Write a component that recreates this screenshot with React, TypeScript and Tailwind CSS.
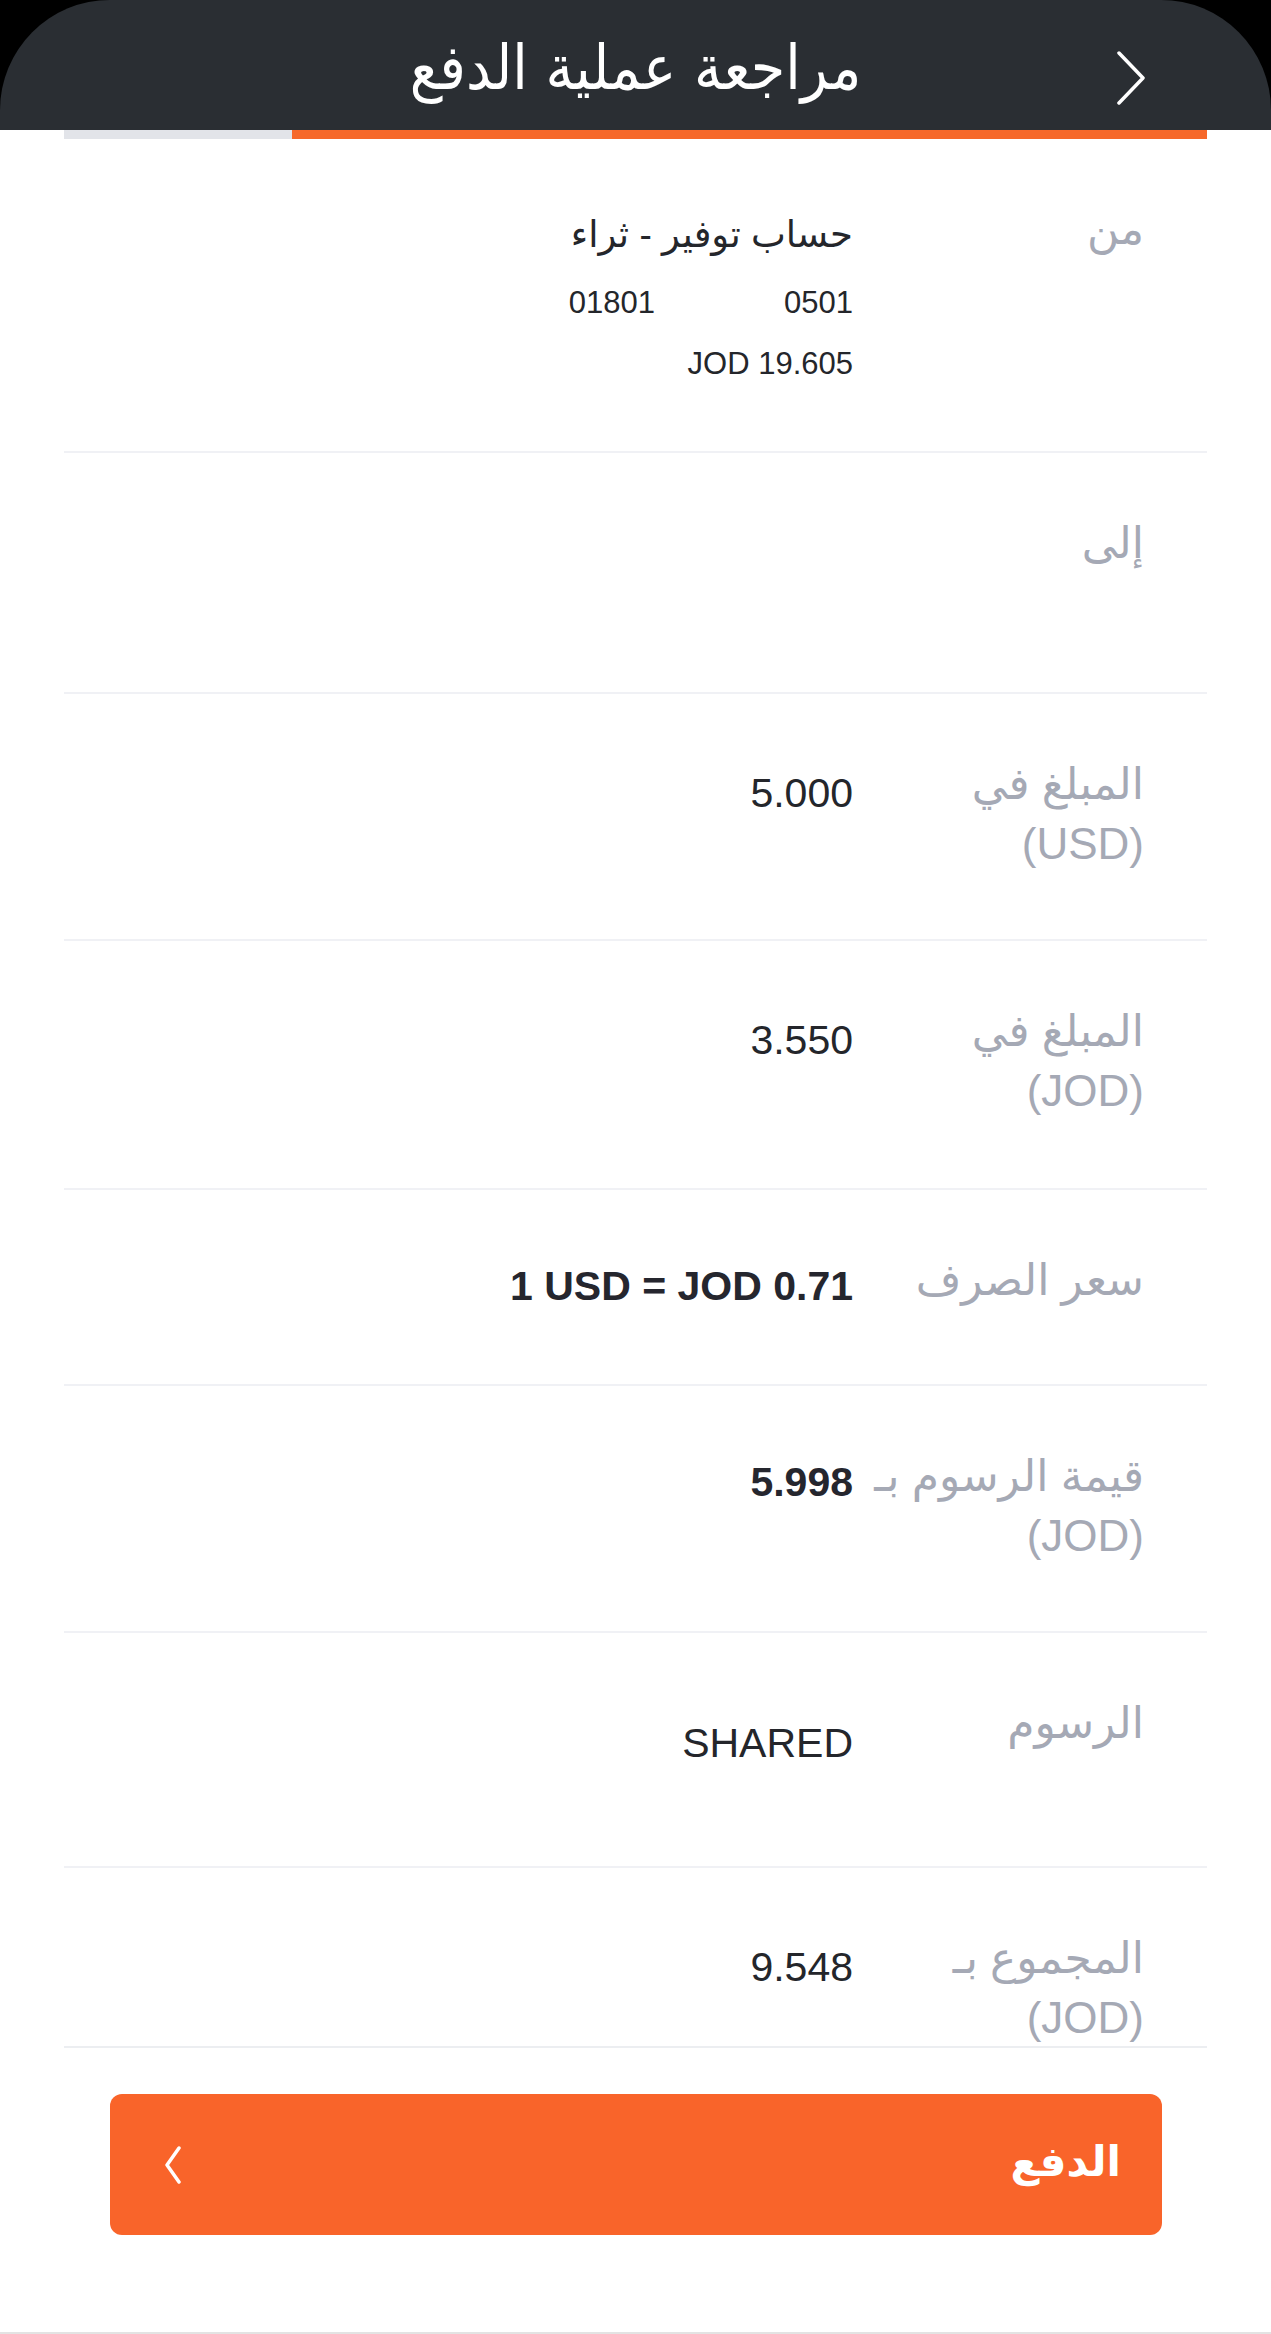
import React from "react";

type Row = {
  label: string[];
  value: string;
  bold?: boolean;
  height: string;
  valueOffset: string;
};

const rows: Row[] = [
  { label: ["إلى"], value: "", height: "h-[241px]", valueOffset: "mt-[9px]" },
  { label: ["المبلغ في", "(USD)"], value: "5.000", height: "h-[247px]", valueOffset: "mt-[9px]" },
  { label: ["المبلغ في", "(JOD)"], value: "3.550", height: "h-[249px]", valueOffset: "mt-[9px]" },
  { label: ["سعر الصرف"], value: "1 USD = JOD 0.71", bold: true, height: "h-[196px]", valueOffset: "mt-[6px]" },
  { label: ["قيمة الرسوم بـ", "(JOD)"], value: "5.998", bold: true, height: "h-[247px]", valueOffset: "mt-[6px]" },
  { label: ["الرسوم"], value: "SHARED", height: "h-[235px]", valueOffset: "mt-[20px]" },
  { label: ["المجموع بـ", "(JOD)"], value: "9.548", height: "h-[250px]", valueOffset: "mt-[9px]" },
];

function Label({ lines }: { lines: string[] }) {
  return (
    <div className="w-[270px] shrink-0 text-right text-[44px] leading-[60px] text-[#a5a9b5]">
      {lines.map((l) => (
        <div key={l}>{l}</div>
      ))}
    </div>
  );
}

function DetailRow({ row }: { row: Row }) {
  return (
    <div className={`flex shrink-0 gap-[21px] border-b-2 border-[#f0f1f5] pr-[63px] pt-[60px] ${row.height}`}>
      <Label lines={row.label} />
      <div
        className={`flex-1 text-right text-[41px] leading-[60px] ${row.valueOffset} ${
          row.bold ? "font-bold text-[#25262e]" : "text-[#24262b]"
        }`}
      >
        <span dir="ltr">{row.value}</span>
      </div>
    </div>
  );
}

export default function App() {
  return (
    <div
      dir="rtl"
      className="flex h-[2334px] w-[1271px] flex-col overflow-hidden bg-white"
      style={{ fontFamily: '"Liberation Sans", "DejaVu Sans", sans-serif' }}
    >
      {/* header */}
      <div className="shrink-0 bg-black">
        <div className="grid h-[130px] grid-cols-[1fr_auto_1fr] items-center rounded-t-[110px] bg-[#2a2e33]">
          <div className="flex justify-start pr-[125px] pt-[26px]">
            <svg width="30" height="54" viewBox="0 0 30 54" fill="none">
              <polyline points="3,2 27,27 3,52" stroke="white" strokeWidth="3.5" strokeLinecap="round" strokeLinejoin="round" />
            </svg>
          </div>
          <h1
            className="pt-[6px] text-[62px] leading-none text-white"
            style={{ fontFamily: '"DejaVu Sans Condensed", "DejaVu Sans", sans-serif' }}
          >
            مراجعة عملية الدفع
          </h1>
          <div />
        </div>
      </div>

      {/* progress */}
      <div className="mx-[64px] flex h-[9px] shrink-0">
        <div className="w-[915px] bg-[#f6682a]" />
        <div className="flex-1 bg-[#e2e4e9]" />
      </div>

      {/* details */}
      <div className="mx-[64px] flex flex-1 flex-col overflow-hidden">
        <div className="flex h-[314px] shrink-0 gap-[21px] border-b-2 border-[#f0f1f5] pr-[63px] pt-[60px]">
          <Label lines={["من"]} />
          <div className="flex-1 text-right text-[#24262b]">
            <div className="mt-[6px] text-[37px] leading-[60px]">حساب توفير - ثراء</div>
            <div className="mt-[18px] flex gap-[129px] text-[31px] leading-[40px]">
              <span>0501</span>
              <span>01801</span>
            </div>
            <div className="mt-[21px] text-[31px] leading-[40px]">
              <span dir="ltr">JOD 19.605</span>
            </div>
          </div>
        </div>
        {rows.map((r) => (
          <DetailRow key={r.label.join()} row={r} />
        ))}
      </div>

      {/* footer */}
      <div className="mx-[64px] shrink-0 border-t-2 border-[#eceef1] pb-[97px] pt-[46px]">
        <button className="mx-[45px] flex h-[141px] w-[1052px] items-center justify-between rounded-[12px] bg-[#f9642a] pl-[54px] pr-[41px] text-white">
          <span className="pb-[6px] text-[42px] font-bold" style={{ fontFamily: '"DejaVu Sans", sans-serif' }}>
            الدفع
          </span>
          <svg width="18" height="38" viewBox="0 0 18 38" fill="none">
            <polyline points="15,2 3,19 15,36" stroke="white" strokeWidth="3.5" strokeLinecap="round" strokeLinejoin="round" />
          </svg>
        </button>
      </div>
      <div className="h-[2px] shrink-0 bg-[#e3e3e3]" />
    </div>
  );
}
